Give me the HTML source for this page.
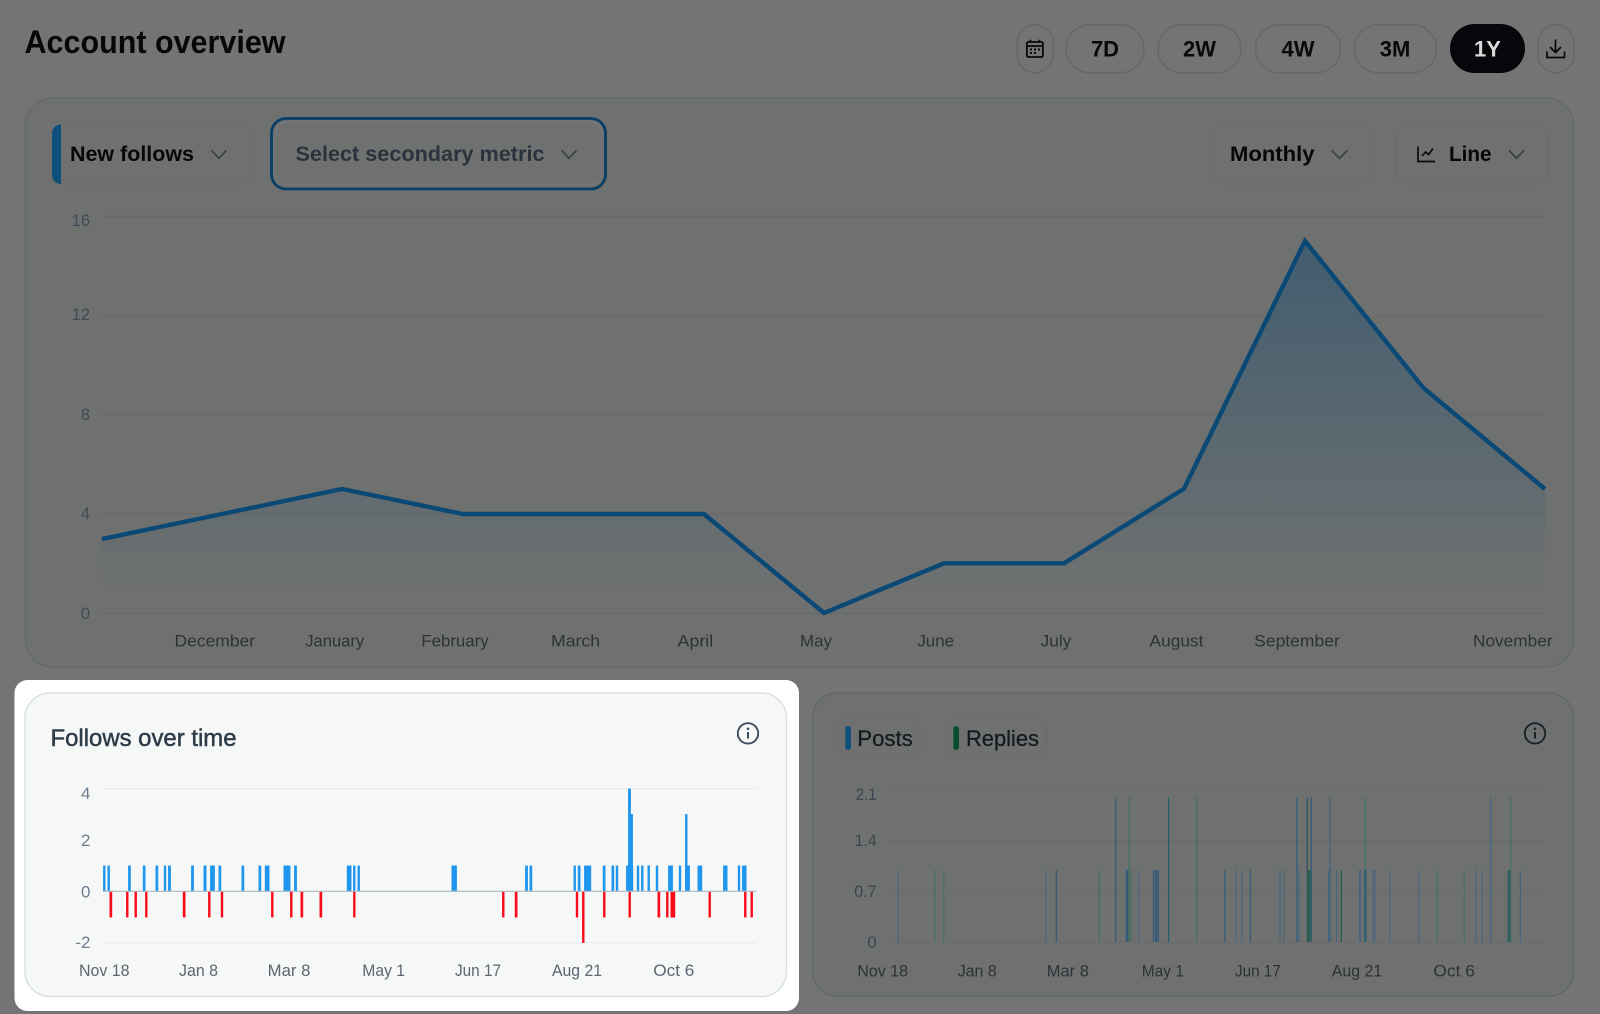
<!DOCTYPE html>
<html><head><meta charset="utf-8"><title>Account overview</title>
<style>
html,body{margin:0;padding:0;background:#747474;width:1600px;height:1014px;overflow:hidden}
svg{display:block;position:absolute;left:0;top:0}
text{font-family:"Liberation Sans",sans-serif}
</style></head><body>
<svg width="1600" height="1014" viewBox="0 0 1600 1014" xmlns="http://www.w3.org/2000/svg">
<defs>
<linearGradient id="ar" gradientUnits="userSpaceOnUse" x1="0" y1="241" x2="0" y2="613">
<stop offset="0" stop-color="#0a4570" stop-opacity=".45"/>
<stop offset=".95" stop-color="#0a4570" stop-opacity="0"/>
</linearGradient>
</defs>
<rect width="1600" height="1014" fill="#747474"/>

<!-- header -->
<text x="24.500" y="53" font-size="32" font-weight="700" fill="#050709" textLength="261" lengthAdjust="spacingAndGlyphs">Account overview</text>
<g fill="none" stroke="#636868" stroke-width="1.500">
<rect x="1017" y="24.700" width="36" height="48" rx="18"/>
<rect x="1066" y="24.700" width="78" height="48" rx="24"/>
<rect x="1158" y="24.700" width="83" height="48" rx="24"/>
<rect x="1255.500" y="24.700" width="85" height="48" rx="24"/>
<rect x="1354.500" y="24.700" width="82" height="48" rx="24"/>
<rect x="1538" y="24.700" width="36" height="48" rx="18"/>
</g>
<rect x="1450" y="24" width="75" height="49" rx="24.500" fill="#05070a"/>
<g font-size="22" font-weight="700" fill="#08090b" text-anchor="middle">
<text x="1105" y="56.500">7D</text>
<text x="1199.500" y="56.500">2W</text>
<text x="1298" y="56.500">4W</text>
<text x="1395" y="56.500">3M</text>
<text x="1487.500" y="56.500" fill="#d8dada">1Y</text>
</g>
<!-- calendar icon -->
<g fill="none" stroke="#08090b" stroke-width="1.800">
<rect x="1026.900" y="42" width="16" height="15" rx="1.500"/>
<path d="M1026.900 46h16M1030.500 39.800v3M1039.300 39.800v3"/>
</g>
<g fill="#08090b"><rect x="1030" y="48.500" width="2" height="2"/><rect x="1034" y="48.500" width="2" height="2"/><rect x="1038" y="48.500" width="2" height="2"/><rect x="1030" y="52" width="2" height="2"/><rect x="1034" y="52" width="2" height="2"/></g>
<!-- download icon -->
<path d="M1555.500 39.500v12.500M1550 47l5.500 5.500 5.500-5.500M1547 51.500v6h17.500v-6" fill="none" stroke="#08090b" stroke-width="1.700"/>

<!-- main card -->
<rect x="25.500" y="98" width="1548" height="569" rx="27" fill="#6f7170" stroke="#636a6e" stroke-width="1.500"/>
<!-- dropdowns -->
<g fill="none" stroke="#696d6d" stroke-width="1.200">
<rect x="52.500" y="124.500" width="197.500" height="59.500" rx="11"/>
<rect x="1211" y="124.500" width="159" height="59.500" rx="11"/>
<rect x="1396.500" y="124.500" width="151" height="59.500" rx="11"/>
<rect x="275.500" y="122" width="326" height="62.500" rx="11" stroke="#74787a" stroke-width="1.500"/>
</g>
<path d="M61 124.500V184C55.500 184 52 180 52 175V133.500C52 128.500 55.500 124.500 61 124.500Z" fill="#0f4f7c"/>
<rect x="271.500" y="118.500" width="334" height="70.500" rx="14.500" fill="none" stroke="#083f66" stroke-width="2.800"/>
<text x="70" y="161" font-size="21.400" font-weight="700" fill="#050709" textLength="124" lengthAdjust="spacingAndGlyphs">New follows</text>
<text x="295.500" y="161" font-size="21.500" font-weight="700" fill="#2a323c" textLength="249" lengthAdjust="spacingAndGlyphs">Select secondary metric</text>
<text x="1230" y="161" font-size="21.400" font-weight="700" fill="#050709" textLength="84.500" lengthAdjust="spacingAndGlyphs">Monthly</text>
<text x="1449" y="161" font-size="21.400" font-weight="700" fill="#050709" textLength="42.500" lengthAdjust="spacingAndGlyphs">Line</text>
<g fill="none" stroke="#3a3f42" stroke-width="1.700">
<path d="M211.500 150.300l7.500 8 7.500-8"/>
<path d="M561.500 150.300l7.500 8 7.500-8"/>
<path d="M1331.500 150.300l8 8 8-8"/>
<path d="M1509 150.300l7.500 8 7.500-8"/>
</g>
<path d="M1418 146.500v15h17M1422 156l3.500-4 3 2.500 4.500-6" fill="none" stroke="#08090b" stroke-width="1.700"/>

<!-- main chart -->
<g stroke="#676a6a" stroke-width="1.200">
<path d="M102 216.300H1545M102 315.700H1545M102 414.300H1545M102 513.700H1545M102 613.300H1545"/>
</g>
<g font-size="16.500" fill="#414a56" text-anchor="end">
<text x="90" y="226">16</text>
<text x="90" y="320">12</text>
<text x="90" y="420">8</text>
<text x="90" y="519">4</text>
<text x="90" y="619">0</text>
</g>
<path d="M102 539L222 514L342 489L463 514L704 514L824 613L944 563.300L1064 563.300L1184 488.700L1305 241L1423.500 388L1545 489V613.300H102Z" fill="url(#ar)"/>
<path d="M102 539L222 514L342 489L463 514L704 514L824 613L944 563.300L1064 563.300L1184 488.700L1305 241L1423.500 388L1545 489" fill="none" stroke="#0a4875" stroke-width="4.400"/>
<g font-size="17" fill="#2e3235" text-anchor="middle">
<text x="214.800" y="646.500" textLength="80.600" lengthAdjust="spacingAndGlyphs">December</text>
<text x="334.700" y="646.500" textLength="59" lengthAdjust="spacingAndGlyphs">January</text>
<text x="455" y="646.500" textLength="67.300" lengthAdjust="spacingAndGlyphs">February</text>
<text x="575.500" y="646.500" textLength="49" lengthAdjust="spacingAndGlyphs">March</text>
<text x="695.400" y="646.500" textLength="35.700" lengthAdjust="spacingAndGlyphs">April</text>
<text x="816" y="646.500" textLength="32" lengthAdjust="spacingAndGlyphs">May</text>
<text x="935.700" y="646.500" textLength="36.700" lengthAdjust="spacingAndGlyphs">June</text>
<text x="1056" y="646.500" textLength="30.600" lengthAdjust="spacingAndGlyphs">July</text>
<text x="1176.500" y="646.500" textLength="54" lengthAdjust="spacingAndGlyphs">August</text>
<text x="1297" y="646.500" textLength="85.700" lengthAdjust="spacingAndGlyphs">September</text>
<text x="1512.800" y="646.500" textLength="79.600" lengthAdjust="spacingAndGlyphs">November</text>
</g>

<!-- bottom left: highlighted -->
<rect x="14.500" y="680" width="784.500" height="331" rx="13" fill="#fff"/>
<rect x="25" y="693" width="761.500" height="303.500" rx="25" fill="#f6f8f8" stroke="#d3dce3" stroke-width="1.300"/>
<text x="50.500" y="746" font-size="24" fill="#2f3d4b" stroke="#2f3d4b" stroke-width=".5" textLength="186" lengthAdjust="spacingAndGlyphs">Follows over time</text>
<g fill="none" stroke="#3d4c59" stroke-width="1.900"><circle cx="748" cy="733.400" r="10.200"/></g>
<rect x="747" y="732" width="2" height="6.500" fill="#3d4c59"/><circle cx="748" cy="728.800" r="1.300" fill="#3d4c59"/>
<path d="M103.300 788.700H756.700M103.300 942.700H756.700" stroke="#e5eaee" stroke-width="1.200"/>
<g font-size="17" fill="#6e7f90" text-anchor="end">
<text x="90.500" y="799">4</text>
<text x="90.500" y="846">2</text>
<text x="90.500" y="897.500">0</text>
<text x="90.500" y="948">-2</text>
</g>
<g font-size="16.500" fill="#5b6670">
<text x="79" y="976" textLength="50.500" lengthAdjust="spacingAndGlyphs">Nov 18</text>
<text x="179" y="976" textLength="39" lengthAdjust="spacingAndGlyphs">Jan 8</text>
<text x="267.700" y="976" textLength="42.700" lengthAdjust="spacingAndGlyphs">Mar 8</text>
<text x="362.300" y="976" textLength="42.700" lengthAdjust="spacingAndGlyphs">May 1</text>
<text x="455" y="976" textLength="46" lengthAdjust="spacingAndGlyphs">Jun 17</text>
<text x="552" y="976" textLength="50" lengthAdjust="spacingAndGlyphs">Aug 21</text>
<text x="653.300" y="976" textLength="41" lengthAdjust="spacingAndGlyphs">Oct 6</text>
</g>
<!-- blue bars -->
<g fill="#1f96ee" stroke="#1f96ee" stroke-width=".4">
<path d="M103.300 865.700h2v25.600h-2zM107.700 865.700h2v25.600h-2zM128.300 865.700h2.300v25.600h-2.300zM143 865.700h2.300v25.600h-2.300zM155.700 865.700h2.300v25.600h-2.300zM164 865.700h2v25.600h-2zM168.300 865.700h2.400v25.600h-2.400zM191.300 865.700h2.400v25.600h-2.400zM203.700 865.700h2.600v25.600h-2.600zM210.300 865.700h4.400v25.600h-4.400zM218.700 865.700h2.300v25.600h-2.300zM241.700 865.700h2.300v25.600h-2.300zM258.700 865.700h2.300v25.600h-2.300zM265 865.700h4.300v25.600h-4.300zM283.700 865.700h6.600v25.600h-6.600zM294.300 865.700h2.400v25.600h-2.400zM347 865.700h4.300v25.600h-4.300zM353.300 865.700h2v25.600h-2zM357.700 865.700h2v25.600h-2z"/>
<path d="M451.700 865.700h5v25.600h-5zM525.300 865.700h2.400v25.600h-2.400zM529.700 865.700h2.300v25.600h-2.300zM573.700 865.700h2v25.600h-2zM578 865.700h2.300v25.600h-2.300zM584.300 865.700h6.700v25.600h-6.700zM603 865.700h2.300v25.600h-2.300zM611.700 865.700h2.300v25.600h-2.300zM616 865.700h2v25.600h-2zM626.300 865.700h6.700v25.600h-6.700zM628.300 788.700h2.400v102.600h-2.400zM630.700 814.300h2v77h-2zM637 865.700h2v25.600h-2zM641.300 865.700h2v25.600h-2zM647.700 865.700h2v25.600h-2zM656 865.700h2v25.600h-2zM668.300 865.700h4.400v25.600h-4.400zM679 865.700h2v25.600h-2zM685.300 814.300h2v77h-2zM685.300 865.700h4.400v25.600h-4.400zM697.700 865.700h4.300v25.600h-4.300zM723.300 865.700h4v25.600h-4zM738 865.700h2v25.600h-2zM742.300 865.700h4v25.600h-4z"/>
</g>
<!-- red bars -->
<g fill="#fb0a1a" stroke="#fb0a1a" stroke-width=".4">
<path d="M109.700 891.300h2.300v26h-2.300zM126.300 891.300h2v26h-2zM134.700 891.300h2v26h-2zM145.300 891.300h2v26h-2zM183 891.300h2.300v26h-2.300zM208.300 891.300h2v26h-2zM221 891.300h2v26h-2zM271.300 891.300h2v26h-2zM290.300 891.300h2v26h-2zM300.700 891.300h2.300v26h-2.300zM319.700 891.300h2.300v26h-2.300zM353.300 891.300h2v26h-2z"/>
<path d="M502.300 891.300h2v26h-2zM515 891.300h2.300v26h-2.300zM576 891.300h2v26h-2zM582.300 891.300h2v51.400h-2zM603.300 891.300h2v26h-2zM628.700 891.300h2v26h-2zM657.700 891.300h2.300v26h-2.300zM666.300 891.300h2v26h-2zM670.700 891.300h4.300v26h-4.300zM708.700 891.300h2v26h-2zM744.300 891.300h2v26h-2zM750.700 891.300h2v26h-2z"/>
</g>
<path d="M103.300 891.300H756.700" stroke="#a9b7c3" stroke-width="1.200"/>

<!-- bottom right -->
<rect x="812.500" y="693" width="761" height="303.500" rx="25" fill="#6f7170" stroke="#5c666e" stroke-width="1.300"/>
<g fill="none" stroke="#696d6d" stroke-width="1.200">
<rect x="838" y="718.500" width="82" height="38.500" rx="10"/>
<rect x="946.500" y="718.500" width="100" height="38.500" rx="10"/>
</g>
<rect x="845.300" y="726" width="5.700" height="24" rx="2.800" fill="#0f4f7c"/>
<rect x="953.300" y="726" width="5.700" height="24" rx="2.800" fill="#054f30"/>
<g font-size="22" fill="#14191f" stroke="#14191f" stroke-width=".25">
<text x="857.300" y="746" textLength="55.500" lengthAdjust="spacingAndGlyphs">Posts</text>
<text x="966" y="746" textLength="73" lengthAdjust="spacingAndGlyphs">Replies</text>
</g>
<circle cx="1535" cy="733.400" r="10.200" fill="none" stroke="#1b222a" stroke-width="1.900"/>
<rect x="1534" y="732" width="2" height="6.500" fill="#1b222a"/><circle cx="1535" cy="728.800" r="1.300" fill="#1b222a"/>
<path d="M889.300 789.300H1545M889.300 840.700H1545M889.300 891.300H1545M889.300 942.300H1545" stroke="#676a6a" stroke-width="1"/>
<g font-size="17" fill="#3d4551" text-anchor="end">
<text x="876.700" y="800" textLength="21" lengthAdjust="spacingAndGlyphs">2.1</text>
<text x="876.700" y="846" textLength="22" lengthAdjust="spacingAndGlyphs">1.4</text>
<text x="876.700" y="897" textLength="22.500" lengthAdjust="spacingAndGlyphs">0.7</text>
<text x="876.700" y="948">0</text>
</g>
<g font-size="16.500" fill="#2e3236">
<text x="857.300" y="976.500" textLength="50.700" lengthAdjust="spacingAndGlyphs">Nov 18</text>
<text x="957.700" y="976.500" textLength="39" lengthAdjust="spacingAndGlyphs">Jan 8</text>
<text x="1046.700" y="976.500" textLength="42.300" lengthAdjust="spacingAndGlyphs">Mar 8</text>
<text x="1141.700" y="976.500" textLength="42.300" lengthAdjust="spacingAndGlyphs">May 1</text>
<text x="1235" y="976.500" textLength="45.700" lengthAdjust="spacingAndGlyphs">Jun 17</text>
<text x="1331.700" y="976.500" textLength="50.600" lengthAdjust="spacingAndGlyphs">Aug 21</text>
<text x="1433.300" y="976.500" textLength="41.700" lengthAdjust="spacingAndGlyphs">Oct 6</text>
</g>
<g fill="none" stroke-width="1.200">
<path stroke="#47657f" d="M898.300 870V942M1046 870V942M1138.700 870V942M1280 870V942M1284 870V942M1336.700 870V942M1373 870V942M1374.700 870V942M1389.700 870V942M1419 870V942M1476 870V942M1482.300 870V942M1520.300 870V942M1299 870V942M1241.700 870V942M1235.700 870V942"/>
<path stroke="#30587a" d="M1056.300 870V942M1115.700 797.300V942M1126.300 870V942M1127.700 870V942M1153.300 870V942M1155.300 870V942M1156.700 870V942M1158.300 870V942M1225 870V942M1250.300 870V942M1297 797.300V942M1311.300 797.300V942M1360 870V942"/>
<path stroke="#47657f" stroke-width="1.400" d="M1330.300 797.300V942M1328.700 870V942M1490.700 797.300V942"/>
<path stroke="#43705f" d="M935 870V942M943.700 870V942M1099.300 870V942M1129 797.300V942M1131 870V942M1196.700 797.300V942M1365.300 797.300V942M1437 870V942M1464.300 870V942M1510.700 797.300V942"/>
<path stroke="#1f6069" d="M1168.700 797.300V942"/>
<path stroke="#2f5558" d="M1307.300 797.300V942"/>
<path stroke="#2a5f50" stroke-width="2.800" d="M1309.300 870V942"/>
<path stroke="#1f5a48" d="M1341.300 870V942"/>
<path stroke="#2e6070" stroke-width="2.700" d="M1365.300 870V942"/>
<path stroke="#2f5f60" stroke-width="3" d="M1509 870V942"/>
</g>
</svg>
</body></html>
